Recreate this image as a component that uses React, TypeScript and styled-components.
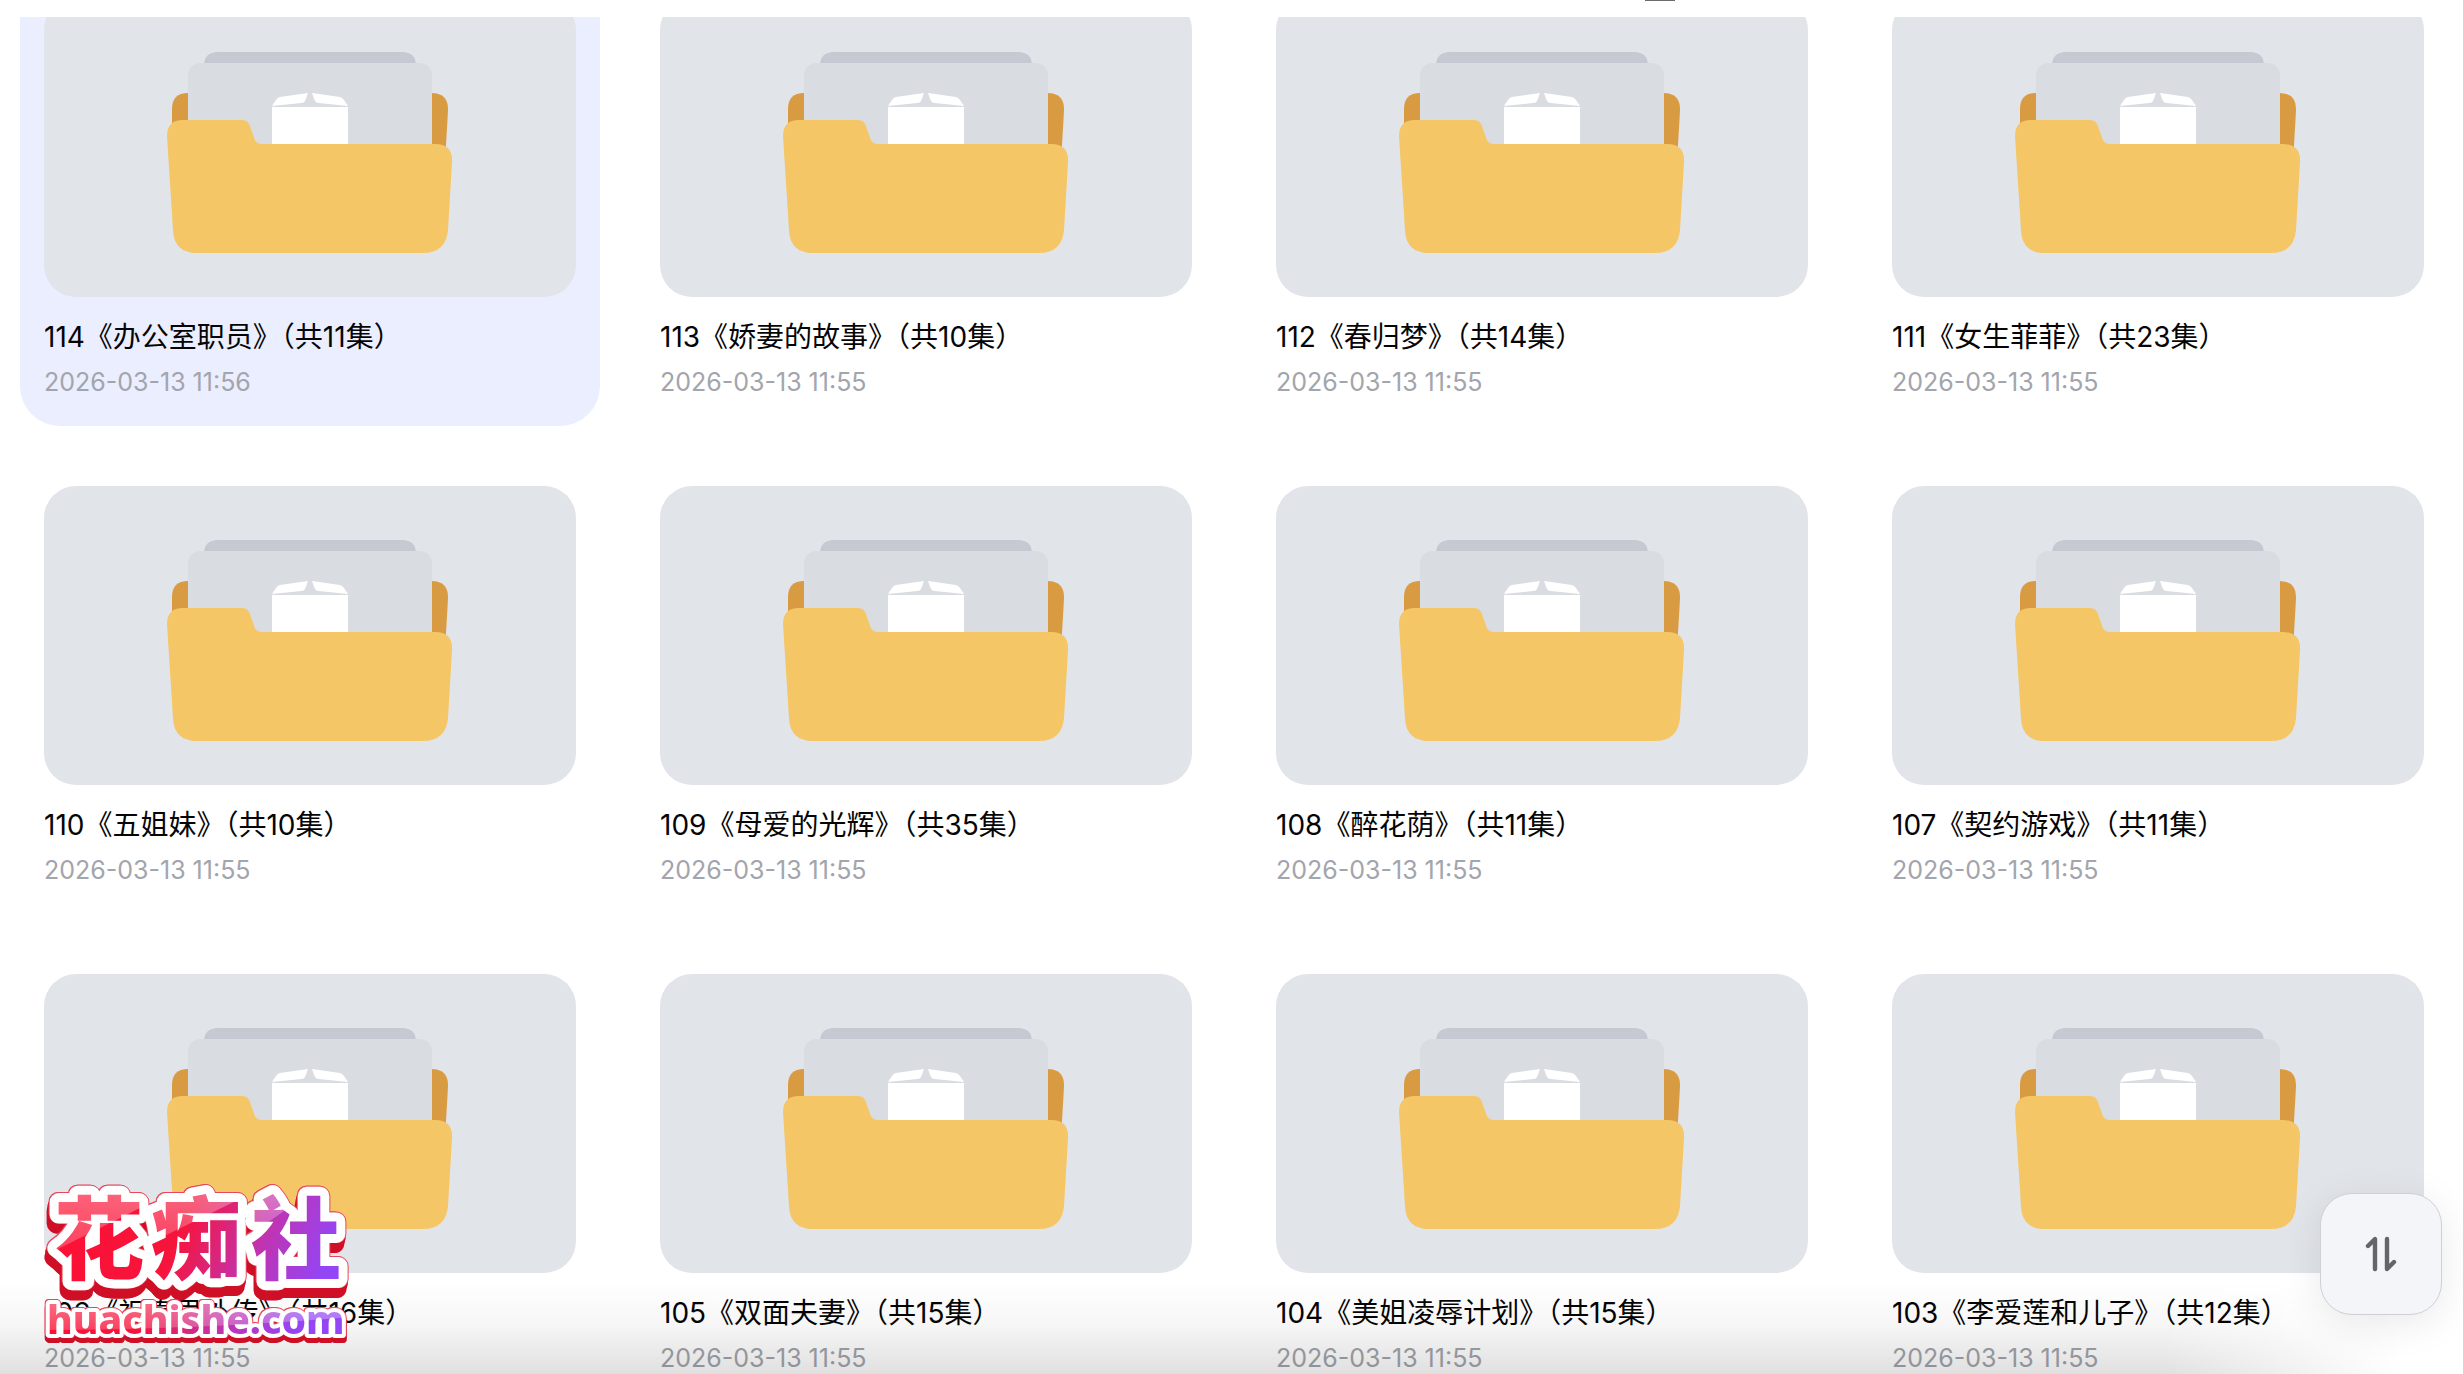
import React from 'react';
import styled, { createGlobalStyle } from 'styled-components';

const GlobalStyle = createGlobalStyle`
  *, *::before, *::after { box-sizing: border-box; }
  body {
    margin: 0;
    background: #ffffff;
    font-family: Inter, "Noto Sans CJK SC", sans-serif;
    color: #050505;
  }
`;

const Page = styled.div`
  position: relative;
  display: flex;
  flex-direction: column;
  height: 100vh;
  overflow: hidden;
`;

const TopBar = styled.header`
  flex: none;
  display: flex;
  justify-content: center;
  height: 17px;
  padding-left: 857px;
`;

const ScrollHint = styled.div`
  width: 30px;
  height: 1px;
  background: #6b6b6d;
`;

const Viewport = styled.main`
  flex: 1;
  min-height: 0;
  overflow: hidden;
`;

const Grid = styled.ul`
  display: grid;
  grid-template-columns: repeat(4, 1fr);
  gap: 36px;
  margin: -43px 0 0;
  padding: 0 15px 0 20px;
  list-style: none;
`;

const Card = styled.li<{ $active?: boolean }>`
  height: 452px;
  padding: 24px;
  border-radius: 40px;
  background: ${(p) => (p.$active ? '#ebeeff' : 'transparent')};
`;

const CardLink = styled.a`
  display: flex;
  flex-direction: column;
  color: inherit;
  text-decoration: none;
`;

const Thumb = styled.div`
  display: flex;
  align-items: center;
  justify-content: center;
  aspect-ratio: 16 / 9;
  padding-top: 10px;
  border-radius: 32px;
  background: #e1e4e9;
`;

const FolderSvg = styled.svg`
  display: block;
  width: 286px;
  height: 202px;
`;

const Name = styled.span`
  margin-top: 20px;
  font-size: 28px;
  line-height: 40px;
  white-space: nowrap;
`;

const Time = styled.time`
  margin-top: 8px;
  font-size: 25px;
  line-height: 34px;
  color: #a2a5ad;
`;

const BottomShade = styled.div`
  position: absolute;
  right: 0;
  bottom: 0;
  left: 0;
  height: 94px;
  background: linear-gradient(to top, rgba(0, 0, 0, 0.12), rgba(0, 0, 0, 0.03) 55%, rgba(0, 0, 0, 0));
  mask-image: linear-gradient(to left, transparent 60px, #000 300px);
  pointer-events: none;
`;

const SortButton = styled.button`
  position: absolute;
  right: 21px;
  bottom: 59px;
  display: flex;
  align-items: center;
  justify-content: center;
  width: 122px;
  height: 122px;
  padding: 0;
  border: 1px solid #cfd0d4;
  border-radius: 32px;
  background: #f4f5f8;
  box-shadow: 0 8px 40px rgba(0, 0, 0, 0.09);
`;

const Brand = styled.svg`
  position: absolute;
  left: 32px;
  bottom: 16px;
  width: 332px;
  height: 190px;
  overflow: visible;
  pointer-events: none;
`;

const BrandName = styled.text`
  font-family: "Noto Sans CJK SC", sans-serif;
  font-weight: 900;
  font-size: 90px;
  paint-order: stroke;
  stroke: #ffffff;
  stroke-width: 18px;
  stroke-linejoin: round;
  filter: drop-shadow(1px 0 0 #e8475a) drop-shadow(-1px -1px 0 #e8475a) drop-shadow(-1px 5px 0 #cf0f26) drop-shadow(-1px 5px 0 #cf0f26);
`;

const BrandSite = styled.text`
  font-family: "Noto Sans", sans-serif;
  font-weight: 800;
  font-size: 39px;
  paint-order: stroke;
  stroke: #ffffff;
  stroke-width: 8px;
  stroke-linejoin: round;
  filter: drop-shadow(1px 0 0 #e8475a) drop-shadow(-1px -1px 0 #e8475a) drop-shadow(0 5px 0 #cf0f26);
`;

type Item = { name: string; time: string; active?: boolean };

const items: Item[] = [
  { name: '114《办公室职员》（共11集）', time: '2026-03-13 11:56', active: true },
  { name: '113《娇妻的故事》（共10集）', time: '2026-03-13 11:55' },
  { name: '112《春归梦》（共14集）', time: '2026-03-13 11:55' },
  { name: '111《女生菲菲》（共23集）', time: '2026-03-13 11:55' },
  { name: '110《五姐妹》（共10集）', time: '2026-03-13 11:55' },
  { name: '109《母爱的光辉》（共35集）', time: '2026-03-13 11:55' },
  { name: '108《醉花荫》（共11集）', time: '2026-03-13 11:55' },
  { name: '107《契约游戏》（共11集）', time: '2026-03-13 11:55' },
  { name: '106《祝真思外传》（共16集）', time: '2026-03-13 11:55' },
  { name: '105《双面夫妻》（共15集）', time: '2026-03-13 11:55' },
  { name: '104《美姐凌辱计划》（共15集）', time: '2026-03-13 11:55' },
  { name: '103《李爱莲和儿子》（共12集）', time: '2026-03-13 11:55' },
];

function Folder() {
  return (
    <FolderSvg viewBox="0 0 286 202" aria-hidden="true">
      <path d="M5 110V57Q5 41 21 41H264Q282 41 281 59L278 110Z" fill="#d99b42" />
      <path d="M37 14Q37 0 51 0H235Q249 0 249 14V30H37Z" fill="#c6c9d2" />
      <path d="M21 25Q21 11 35 11H251Q265 11 265 25V110H21Z" fill="#d9dce1" />
      <path d="M105 54L109 48Q110 46 113 45L141 41L138 49Q137 51 134 51Z" fill="#fff" />
      <path d="M181 54L177 48Q176 46 173 45L145 41L148 49Q149 51 152 51Z" fill="#fff" />
      <path d="M105 55H181V110H105Z" fill="#fff" />
      <path
        d="M0 84Q0 68 16 68H75Q81 68 83 74L87 86Q89 92 95 92H268Q286 92 285 110L281 178Q279 201 256 201H30Q7 201 6 178Z"
        fill="#f5c665"
      />
    </FolderSvg>
  );
}

function SortIcon() {
  return (
    <svg width="32" height="36" viewBox="0 0 32 36" fill="none" stroke="#656567" strokeWidth="4.4" strokeLinecap="round" strokeLinejoin="round" aria-hidden="true">
      <path d="M3 10L10 3V33" />
      <path d="M22 3V33L29 26" />
    </svg>
  );
}

function BrandLogo() {
  return (
    <Brand viewBox="0 0 332 190" role="img" aria-label="花痴社 huachishe.com">
      <defs>
        <linearGradient id="hue" x1="0" y1="0" x2="1" y2="0.25">
          <stop offset="0" stopColor="#ff1030" />
          <stop offset="0.5" stopColor="#f6143c" />
          <stop offset="0.72" stopColor="#c631a8" />
          <stop offset="0.95" stopColor="#9445f5" />
        </linearGradient>
        <linearGradient id="gloss" x1="0" y1="0" x2="0" y2="1">
          <stop offset="0" stopColor="#fff" stopOpacity="0.4" />
          <stop offset="1" stopColor="#fff" stopOpacity="0.2" />
        </linearGradient>
        <pattern id="ink" patternUnits="userSpaceOnUse" width="332" height="190">
          <rect width="332" height="190" fill="url(#hue)" />
          <path d="M0 0H116V36L20 84H0Z" fill="url(#gloss)" />
          <path d="M116 0H214V28L116 76Z" fill="url(#gloss)" />
          <path d="M214 0H312L214 70Z" fill="url(#gloss)" />
          <path d="M0 130H332V148Q170 162 0 162Z" fill="url(#gloss)" />
        </pattern>
      </defs>
      <BrandName x="22 119 219" y="104" fill="url(#ink)">花痴社</BrandName>
      <BrandSite x="15" y="166" fill="url(#ink)">huachishe.com</BrandSite>
    </Brand>
  );
}

export default function App() {
  return (
    <Page>
      <GlobalStyle />
      <TopBar>
        <ScrollHint />
      </TopBar>
      <Viewport>
        <Grid>
          {items.map((item) => (
            <Card key={item.name} $active={item.active}>
              <CardLink href="#">
                <Thumb>
                  <Folder />
                </Thumb>
                <Name>{item.name}</Name>
                <Time>{item.time}</Time>
              </CardLink>
            </Card>
          ))}
        </Grid>
      </Viewport>
      <BottomShade />
      <SortButton type="button" aria-label="排序">
        <SortIcon />
      </SortButton>
      <BrandLogo />
    </Page>
  );
}
